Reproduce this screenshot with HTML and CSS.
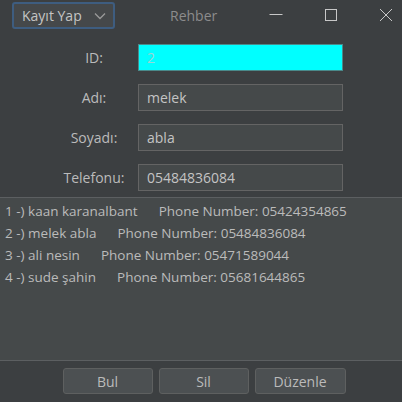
FILE: index.html
```html
<!DOCTYPE html>
<html>
<head>
<meta charset="utf-8">
<link rel="stylesheet" href="styles.css">
</head>
<body>
<div class="window">
  <div class="titlebar">
    <div class="combo">
      <span class="combo-text">Kayıt Yap</span>
      <svg class="chev" width="12" height="8" viewBox="0 0 12 8"><path d="M1 1.5 L6 6.5 L11 1.5" fill="none" stroke="#9a9a9a" stroke-width="1.3"/></svg>
    </div>
    <span class="title">Rehber</span>
    <div class="controls">
      <svg width="14" height="14" viewBox="0 0 14 14"><path d="M0.5 7.5 H13.5" stroke="#c8c8c8" stroke-width="1"/></svg>
      <svg width="14" height="14" viewBox="0 0 14 14"><rect x="1.5" y="1.5" width="11" height="11" fill="none" stroke="#c8c8c8" stroke-width="1"/></svg>
      <svg width="14" height="14" viewBox="0 0 14 14"><path d="M1 1 L13 13 M13 1 L1 13" stroke="#c8c8c8" stroke-width="1"/></svg>
    </div>
  </div>
  <div class="form">
    <label class="lbl">ID:</label><div class="field cyan">2</div>
    <label class="lbl">Adı:</label><div class="field">melek</div>
    <label class="lbl">Soyadı:</label><div class="field">abla</div>
    <label class="lbl">Telefonu:</label><div class="field">05484836084</div>
  </div>
  <div class="list">
    <div class="item">1 -) kaan karanalbant      Phone Number: 05424354865</div>
    <div class="item">2 -) melek abla      Phone Number: 05484836084</div>
    <div class="item">3 -) ali nesin      Phone Number: 05471589044</div>
    <div class="item">4 -) sude şahin      Phone Number: 05681644865</div>
  </div>
  <div class="buttons">
    <button class="btn">Bul</button>
    <button class="btn">Sil</button>
    <button class="btn wide">Düzenle</button>
  </div>
</div>
</body>
</html>
```
FILE: styles.css
```css
html, body {
  margin: 0;
  padding: 0;
  background: #3c3f41;
}
body {
  font-family: "Open Sans", "Noto Sans", sans-serif;
  font-size: 13px;
  color: #bbbbbb;
}
.window {
  width: 402px;
  height: 402px;
  display: flex;
  flex-direction: column;
  background: #3c3f41;
}
.titlebar {
  height: 33px;
  display: flex;
  align-items: flex-start;
  flex-shrink: 0;
}
.combo {
  margin-left: 12px;
  margin-top: 2px;
  width: 103px;
  height: 27px;
  box-sizing: border-box;
  border: 2px solid #3e5d80;
  border-radius: 3px;
  background: #45484a;
  display: flex;
  align-items: center;
  justify-content: space-between;
  padding: 0 7px 0 8px;
}
.combo-text {
  font-size: 14px;
  color: #c4c4c4;
}
.title {
  margin-left: 55px;
  margin-top: 6px;
  font-size: 14px;
  color: #8c8c8c;
}
.controls {
  margin-left: auto;
  margin-right: 9px;
  margin-top: 8px;
  display: flex;
  gap: 41px;
}
.controls svg:first-child {
  margin-top: -1px;
}
.form {
  display: grid;
  grid-template-columns: 88px 205px;
  grid-auto-rows: 27px;
  row-gap: 13px;
  padding: 11px 0 6px 50px;
  flex-shrink: 0;
}
.lbl {
  text-align: center;
  line-height: 27px;
  font-size: 14px;
  color: #bbbbbb;
}
.field {
  box-sizing: border-box;
  border: 1px solid #646464;
  background: #45494a;
  padding-left: 8px;
  line-height: 25px;
  font-size: 14px;
  color: #c4c4c4;
}
.field.cyan {
  background: #00ffff;
  border-color: #4a8a8a;
  color: #9ad6d6;
}
.list {
  flex: 1;
  border-top: 1px solid #5c5f61;
  border-bottom: 1px solid #5c5f61;
  background: #45494a;
  padding: 2px 0 0 5px;
}
.item {
  white-space: pre;
  line-height: 22px;
  font-size: 13.5px;
  color: #bbbbbb;
}
.buttons {
  height: 41px;
  flex-shrink: 0;
  display: flex;
  justify-content: center;
  align-items: flex-start;
  gap: 6px;
  padding: 7px 0 0 6px;
  box-sizing: border-box;
}
.btn {
  width: 90px;
  height: 26px;
  box-sizing: border-box;
  border: 1px solid #5e6060;
  border-radius: 3px;
  background: #4c5052;
  color: #bbbbbb;
  font-family: "Open Sans", "Noto Sans", sans-serif;
  font-size: 14px;
  padding: 0;
}
.btn.wide {
  width: 91px;
}
```
